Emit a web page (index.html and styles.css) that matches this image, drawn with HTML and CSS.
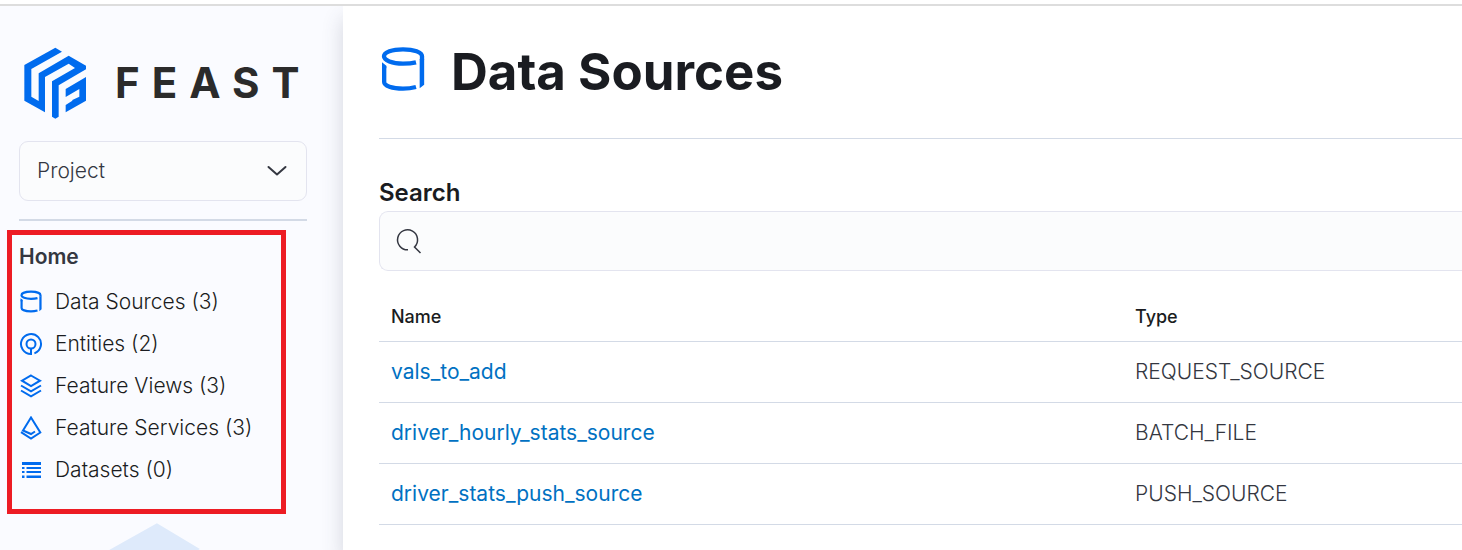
FILE: index.html
```html
<!DOCTYPE html>
<html lang="en">
<head>
<meta charset="utf-8">
<title>Feast - Data Sources</title>
<link rel="stylesheet" href="styles.css">
</head>
<body>
<svg class="symbols" aria-hidden="true">
  <symbol id="feast-mark" viewBox="73 51 189 216">
    <path fill="currentColor" d="M167 53 187 65 95 117V200L117 213V130L207 77 259 107V118L177 166V260L167 266 157 260V154L226 114 207 101 136 141V247L74 212V105Z"/>
    <path fill="currentColor" d="M259 141V212L198 247V225L218 212V210L239 200V177L198 201V177Z"/>
  </symbol>
  <symbol id="icon-database" viewBox="27 33 144 144">
    <path fill="none" stroke="currentColor" stroke-width="13" d="M138 82C126 85 112 86 99 86 66 86 42 76 42 64S66 43 99 43 156 52 156 64V74M42.500 94V141C42.500 152 66 161 99 161 113 161 127 159 138 156"/>
    <path fill="currentColor" d="M149 72H162.500V149L149 160ZM36 82 49 92V100H36Z"/>
  </symbol>
</svg>
<div class="app">
  <aside class="sidebar">
    <svg class="watermark" aria-hidden="true"><use href="#feast-mark"/></svg>
    <a class="brand" href="#">
      <svg class="brand-mark" aria-hidden="true"><use href="#feast-mark"/></svg>
      <span class="brand-name">FEAST</span>
    </a>
    <div class="project">
      <select class="project-select" aria-label="Project"><option>Project</option></select>
      <svg class="project-arrow" viewBox="0 0 24 24" aria-hidden="true"><path d="M3.500 8 12 15.500 20.500 8"/></svg>
    </div>
    <nav class="nav" aria-label="Home">
      <a class="nav-title" href="#">Home</a>
      <ul class="nav-list">
        <li><a class="nav-link" href="#"><svg class="icon" aria-hidden="true"><use href="#icon-database"/></svg>Data Sources (3)</a></li>
        <li><a class="nav-link" href="#"><svg class="icon line" viewBox="0 0 24 24" aria-hidden="true"><path d="M12 23V16.500M12 22A10 10 0 1 1 15.400 21.400"/><circle cx="12" cy="12" r="4.500"/></svg>Entities (2)</a></li>
        <li><a class="nav-link" href="#"><svg class="icon line" viewBox="0 0 24 24" aria-hidden="true"><path d="M12 1.500 21 6.700 12 12 3 6.700ZM2 11.500 12 17.300 22 11.500M2 16.500 12 22.300 22 16.500"/></svg>Feature Views (3)</a></li>
        <li><a class="nav-link" href="#"><svg class="icon line" viewBox="0 0 24 24" aria-hidden="true"><path d="M2 16.200 12 22.500 21.300 16.500 12 1.500 4 14.500 12 18 16 15.500"/></svg>Feature Services (3)</a></li>
        <li><a class="nav-link" href="#"><svg class="icon solid" viewBox="0 0 24 24" aria-hidden="true"><path d="M3 4H22V7H3ZM3 9H5.500V11H3ZM7.500 9H22V11H7.500ZM3 13H5.500V15H3ZM7.500 13H22V15H7.500ZM3 17.500H5.500V20H3ZM7.500 17.500H22V20H7.500Z"/></svg>Datasets (0)</a></li>
      </ul>
      <span class="highlight" aria-hidden="true"></span>
    </nav>
  </aside>
  <main class="content">
    <header class="page-header">
      <svg class="page-icon" aria-hidden="true"><use href="#icon-database"/></svg>
      <h1 class="page-title">Data Sources</h1>
    </header>
    <label class="search-label" for="search">Search</label>
    <div class="search">
      <svg class="search-icon" viewBox="0 0 24 24" aria-hidden="true"><path d="M11 20.800A10 10 0 1 1 17.500 18L23.500 24"/></svg>
      <input class="search-input" id="search" type="search">
    </div>
    <table class="sources">
      <thead><tr><th class="name-col" scope="col">Name</th><th scope="col">Type</th></tr></thead>
      <tbody>
        <tr><td><a class="source-link" href="#">vals_to_add</a></td><td>REQUEST_SOURCE</td></tr>
        <tr><td><a class="source-link" href="#">driver_hourly_stats_source</a></td><td>BATCH_FILE</td></tr>
        <tr><td><a class="source-link" href="#">driver_stats_push_source</a></td><td>PUSH_SOURCE</td></tr>
      </tbody>
    </table>
  </main>
</div>
</body>
</html>
```
FILE: styles.css
```css
* {
  box-sizing: border-box;
}

body {
  margin: 0;
  padding-top: 4px;
  background: #fff;
  color: #343741;
  font: 300 21px/32px Inter, sans-serif;
}

a {
  text-decoration: none;
}

.symbols {
  display: none;
}

.app {
  display: flex;
  min-height: calc(100vh - 4px);
  border-top: 2px solid #ddd;
  overflow: hidden;
}

.sidebar {
  position: relative;
  flex: 0 0 343px;
  padding: 41px 36px 24px 19px;
  overflow: hidden;
  background: #fafbff;
}

.watermark {
  position: absolute;
  top: 513px;
  left: -45px;
  width: 406px;
  height: 464px;
  color: #deeafb;
}

.brand {
  display: flex;
  align-items: center;
  gap: 28px;
  margin-bottom: 22px;
  padding-left: 5px;
  color: #2b2b2b;
}

.brand-mark {
  flex: none;
  width: 63px;
  height: 72px;
  color: #006bee;
}

.brand-name {
  font: 700 42px/72px Inter, sans-serif;
  letter-spacing: 12px;
}

.project {
  position: relative;
}

.project-select {
  display: block;
  width: 100%;
  height: 60px;
  padding: 0 48px 0 17px;
  border: 1px solid #e3e4ef;
  border-radius: 9px;
  appearance: none;
  background: #fbfcfd;
  color: #343741;
  font: inherit;
}

.project-arrow {
  position: absolute;
  top: 18px;
  right: 18px;
  width: 24px;
  height: 24px;
  fill: none;
  stroke: #343741;
  stroke-width: 2;
  stroke-linecap: round;
  stroke-linejoin: round;
  pointer-events: none;
}

.nav {
  position: relative;
  margin-top: 18px;
  padding-top: 20px;
  border-top: 2px solid #d3dae6;
}

.nav-title {
  display: block;
  margin-bottom: 8px;
  color: #343741;
  font-weight: 600;
}

.nav-list {
  margin: 0;
  padding: 0;
  list-style: none;
}

.nav-link {
  display: flex;
  align-items: center;
  gap: 12px;
  height: 42px;
  color: #1a1c21;
}

.icon {
  width: 24px;
  height: 24px;
  color: #006bee;
}

.line {
  fill: none;
  stroke: currentColor;
  stroke-width: 2;
}

.solid {
  fill: currentColor;
}

.highlight {
  position: absolute;
  top: 9px;
  right: 21px;
  bottom: -23px;
  left: -12px;
  border: 5px solid #ed1c24;
  pointer-events: none;
}

.content {
  position: relative;
  flex: 1;
  min-width: 0;
  padding: 34px 0 24px 36px;
  background: #fff;
  box-shadow: 0 12px 20px rgba(60, 65, 90, 0.2);
}

.page-header {
  display: flex;
  align-items: center;
  gap: 24px;
  margin-bottom: 38px;
  padding-bottom: 34px;
  border-bottom: 1px solid #d3dae6;
}

.page-icon {
  width: 48px;
  height: 48px;
  margin-bottom: 4px;
  color: #006bee;
}

.page-title {
  margin: 0;
  color: #1a1c21;
  font-size: 51px;
  font-weight: 700;
  line-height: 64px;
}

.search-label {
  display: block;
  margin-bottom: 2px;
  color: #1a1c21;
  font-size: 24px;
  font-weight: 600;
}

.search {
  display: flex;
  align-items: center;
  gap: 12px;
  height: 60px;
  padding-left: 17px;
  border: 1px solid #e3e4ef;
  border-right: 0;
  border-radius: 9px 0 0 9px;
  background: #fbfcfd;
}

.search-icon {
  flex: none;
  width: 24px;
  height: 24px;
  overflow: visible;
  fill: none;
  stroke: #343741;
  stroke-width: 1.500;
}

.search-input {
  flex: 1;
  min-width: 0;
  height: 100%;
  border: 0;
  outline: 0;
  background: transparent;
  font: inherit;
}

.sources {
  width: 100%;
  margin-top: 21px;
  border-collapse: separate;
  border-spacing: 0;
}

.sources th,
.sources td {
  padding: 0 12px;
  border-bottom: 1px solid #d3dae6;
  text-align: left;
}

.sources th {
  height: 50px;
  color: #1a1c21;
  font-size: 18px;
  font-weight: 500;
}

.sources td {
  height: 61px;
}

.name-col {
  width: 744px;
}

.source-link {
  color: #0071c2;
  font-weight: 400;
}
```
